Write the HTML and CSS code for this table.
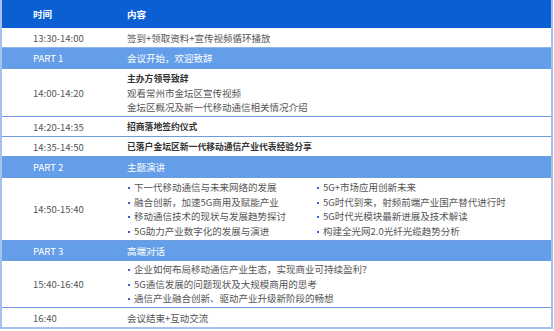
FILE: index.html
```html
<!DOCTYPE html>
<html lang="zh">
<head>
<meta charset="utf-8">
<link rel="stylesheet" href="styles.css">
</head>
<body>
<div class="agenda">
  <div class="row head"><div class="t">时间</div><div class="c">内容</div></div>
  <div class="row r1"><div class="t">13:30-14:00</div><div class="c">签到+领取资料+宣传视频循环播放</div></div>
  <div class="row part p1"><div class="t">PART 1</div><div class="c">会议开始，欢迎致辞</div></div>
  <div class="row r3"><div class="t">14:00-14:20</div><div class="c"><div class="b">主办方领导致辞</div><div>观看常州市金坛区宣传视频</div><div>金坛区概况及新一代移动通信相关情况介绍</div></div></div>
  <div class="row r4"><div class="t">14:20-14:35</div><div class="c b">招商落地签约仪式</div></div>
  <div class="row r5"><div class="t">14:35-14:50</div><div class="c b">已落户金坛区新一代移动通信产业代表经验分享</div></div>
  <div class="row part p2"><div class="t">PART 2</div><div class="c">主题演讲</div></div>
  <div class="row r7"><div class="t">14:50-15:40</div><div class="c two">
    <ul>
      <li>下一代移动通信与未来网络的发展</li>
      <li>融合创新，加速5G商用及赋能产业</li>
      <li>移动通信技术的现状与发展趋势探讨</li>
      <li>5G助力产业数字化的发展与演进</li>
    </ul>
    <ul>
      <li>5G+市场应用创新未来</li>
      <li>5G时代到来，射频前端产业国产替代进行时</li>
      <li>5G时代光模块最新进展及技术解读</li>
      <li>构建全光网2.0光纤光缆趋势分析</li>
    </ul>
  </div></div>
  <div class="row part p3"><div class="t">PART 3</div><div class="c">高端对话</div></div>
  <div class="row r9"><div class="t">15:40-16:40</div><div class="c">
    <ul>
      <li>企业如何布局移动通信产业生态，实现商业可持续盈利？</li>
      <li>5G通信发展的问题现状及大规模商用的思考</li>
      <li>通信产业融合创新、驱动产业升级新阶段的畅想</li>
    </ul>
  </div></div>
  <div class="row r10 last"><div class="t">16:40</div><div class="c">会议结束+互动交流</div></div>
</div>
</body>
</html>
```

FILE: styles.css
```css
html, body {
  margin: 0;
  padding: 0;
  background: #ffffff;
}
body {
  font-family: "Microsoft YaHei", "Noto Sans CJK SC", "Liberation Sans", sans-serif;
  font-size: 9.5px;
  color: #555555;
}
.agenda {
  width: 549px;
  border-left: 2px solid #a6c1ee;
  border-right: 2px solid #a6c1ee;
  border-bottom: 2px solid #a6c1ee;
  box-shadow: 0 1px 1px #d5e0f3;
}
.row {
  display: grid;
  grid-template-columns: 93px 1fr;
  align-items: center;
  border-top: 1px solid #6f9be3;
  box-sizing: border-box;
}
.row .t { padding-left: 31px; }
.row .c { padding-left: 32px; }
.head {
  background: #0b5fd3;
  color: #ffffff;
  font-weight: bold;
  height: 28px;
  border-top: none;
}
.part {
  background: #659ee8;
  color: #ffffff;
}
.b {
  font-weight: bold;
  color: #333333;
  font-size: 8.8px;
}
.r1 { height: 19px; border-top: none; }
.p1 { height: 21px; border-top: 1px solid #8fb4ec; }
.r3 { height: 48px; line-height: 14px; }
.r4 { height: 20px; }
.r5 { height: 20px; }
.p2 { height: 21px; }
.r7 { height: 63px; }
.p3 { height: 20px; }
.r9 { height: 47px; }
.r10 { height: 20px; }
ul {
  list-style: none;
  margin: 0;
  padding: 0;
}
li {
  position: relative;
  padding-left: 7px;
  line-height: 14.5px;
}
li::before {
  content: "";
  position: absolute;
  left: 1px;
  top: 7px;
  width: 2px;
  height: 2px;
  background: #3a5fd0;
}
.two {
  display: grid;
  grid-template-columns: 189px 1fr;
}
```
